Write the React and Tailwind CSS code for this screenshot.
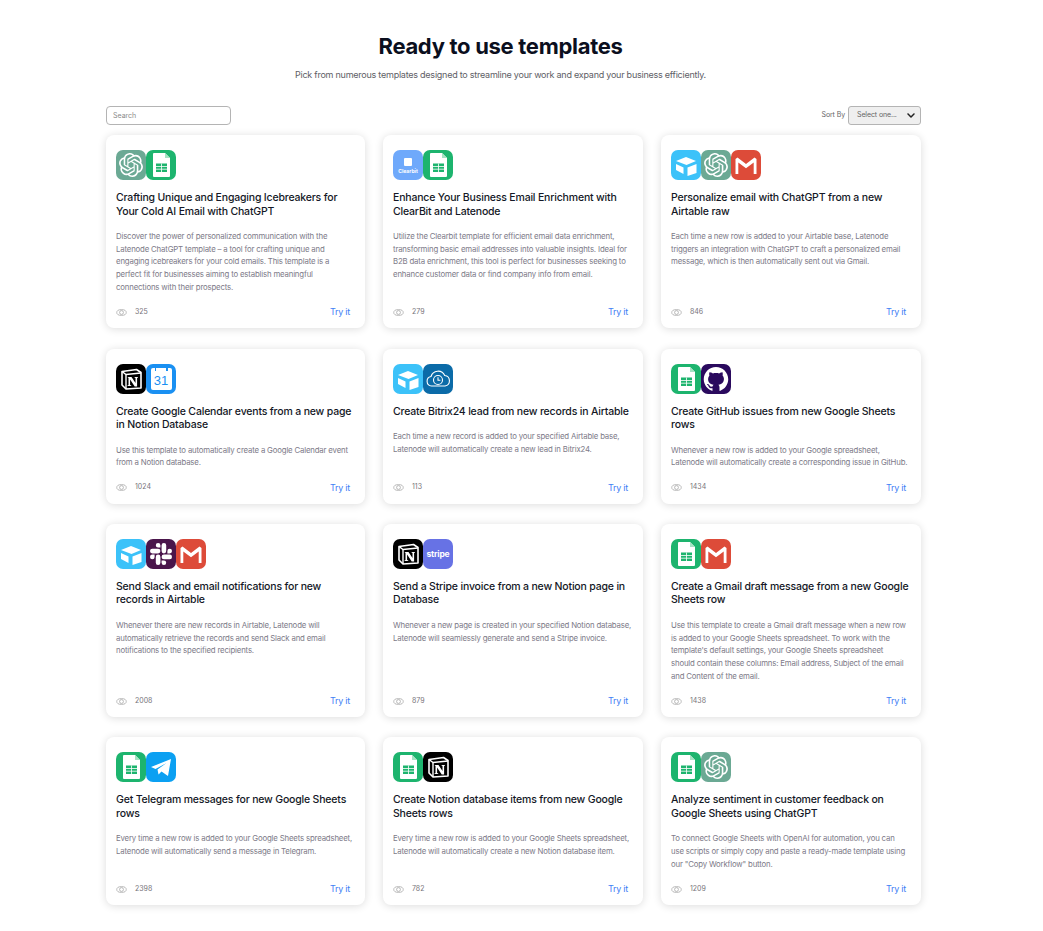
import { useState } from "react"
import { FaChevronDown } from "react-icons/fa"
import { AiOutlineGithub } from "react-icons/ai"
import { SiOpenai, SiSlack } from "react-icons/si"

function Tile({ color, children }) {
  return (
    <div className={`flex h-[30px] w-[30px] items-center justify-center overflow-hidden rounded-[7px] ${color}`}>
      {children}
    </div>
  )
}

const OpenAi = () => (
  <Tile color="bg-[#6ba994]">
    <SiOpenai className="h-[24px] w-[24px] text-white" />
  </Tile>
)

const Sheets = () => (
  <Tile color="bg-[#1db46e]">
    <svg viewBox="0 0 30 30" className="h-[30px] w-[30px]">
      <path d="M8 3h11l5 5v18a1 1 0 0 1-1 1H8a1 1 0 0 1-1-1V4a1 1 0 0 1 1-1z" fill="#fff" />
      <path d="M19 3l5 5h-5z" fill="#a5e3c4" />
      <path d="M10 13.500h11v8.500H10z" fill="#1db46e" />
      <path d="M10 16.500h11M10 19.200h11M15.500 13.500v8.500" stroke="#fff" strokeWidth="0.8" />
    </svg>
  </Tile>
)

const Gmail = () => (
  <Tile color="bg-[#dd4b39]">
    <svg viewBox="0 0 30 30" className="h-[30px] w-[30px]">
      <path d="M4.500 24V9l2-1.500L15 14l8.500-6.500 2 1.500v15h-2.800V12.500L15 18.300 7.300 12.500V24z" fill="#fff" />
    </svg>
  </Tile>
)

const Airtable = () => (
  <Tile color="bg-[#3cc2f9]">
    <svg viewBox="0 0 30 30" className="h-[30px] w-[30px]">
      <path d="M15 7L25 11 15.500 15 5 11z" fill="#fff" />
      <path d="M16.500 17.500L25.500 14V23L16.500 26z" fill="#fff" />
      <path d="M5 14L12.500 17.500V24L5 20z" fill="#fff" />
    </svg>
  </Tile>
)

const Notion = () => (
  <Tile color="bg-black">
    <svg viewBox="0 0 30 30" className="h-[30px] w-[30px]">
      <path d="M6 7.500L20.500 5.500 25 8.500V24L10 25 6 21z" fill="#000" stroke="#fff" strokeWidth="1.600" strokeLinejoin="round" />
      <path d="M6 7.500L10 10.500 25 9" fill="none" stroke="#fff" strokeWidth="1.400" />
      <path d="M10 10.500V25" stroke="#fff" strokeWidth="1.400" />
      <path d="M12.500 13h3l4 6v-5l-1-.6V13h3.500v.4l-.9.6v8.500h-2.400l-4.600-7v5.500l1.200.6v.5h-3.800v-.5l1-.6V14l-1-.5z" fill="#fff" />
    </svg>
  </Tile>
)

const Calendar = () => (
  <Tile color="bg-[#1a90f2]">
    <div className="relative flex h-[22px] w-[21px] items-center justify-center rounded-[2px] bg-white pt-[3px]">
      <span className="font-['Liberation_Sans',sans-serif] text-[13px] leading-none text-[#1a90f2]">31</span>
      <div className="absolute left-[4px] top-0 h-[3px] w-[1.500px] bg-[#1a90f2]" />
      <div className="absolute right-[4px] top-0 h-[3px] w-[1.500px] bg-[#1a90f2]" />
    </div>
  </Tile>
)

const Bitrix = () => (
  <Tile color="bg-[#0b6ba8]">
    <svg viewBox="0 0 30 30" className="h-[30px] w-[30px]" fill="none" stroke="#fff" strokeWidth="1.100">
      <path d="M8.500 22a4.800 4.800 0 0 1-.5-9.500 7.300 7.300 0 0 1 13.700-1 5.300 5.300 0 0 1 .3 10.500z" />
      <circle cx="15" cy="16" r="4.500" />
      <path d="M15 13.300v3h2.400" />
    </svg>
  </Tile>
)

const Github = () => (
  <Tile color="bg-[#2a0a5e]">
    <AiOutlineGithub className="h-[28px] w-[28px] text-white" />
  </Tile>
)

const Slack = () => (
  <Tile color="bg-[#4a154b]">
    <SiSlack className="h-[22px] w-[22px] text-white" />
  </Tile>
)

const Stripe = () => (
  <Tile color="bg-[#6772e5]">
    <span className="text-[8.500px] font-bold tracking-[-0.2px] text-white">stripe</span>
  </Tile>
)

const Clearbit = () => (
  <Tile color="bg-[#6fa9fb]">
    <div className="flex flex-col items-center gap-[3px] pt-[1px]">
      <div className="h-[8px] w-[8px] rounded-[1px] bg-white" />
      <span className="text-[5px] font-bold leading-none text-white">Clearbit</span>
    </div>
  </Tile>
)

const Telegram = () => (
  <Tile color="bg-[#0ba0f2]">
    <svg viewBox="0 0 30 30" className="h-[30px] w-[30px]">
      <path d="M5 15L25 7 22 24 15.500 19.500 12.500 22.500 11.500 17.500 20.500 11 9.500 17z" fill="#fff" />
    </svg>
  </Tile>
)

const templates = [
  {
    icons: [OpenAi, Sheets],
    title: "Crafting Unique and Engaging Icebreakers for\nYour Cold AI Email with ChatGPT",
    text: "Discover the power of personalized communication with the\nLatenode ChatGPT template – a tool for crafting unique and\nengaging icebreakers for your cold emails. This template is a\nperfect fit for businesses aiming to establish meaningful\nconnections with their prospects.",
    views: 325,
  },
  {
    icons: [Clearbit, Sheets],
    title: "Enhance Your Business Email Enrichment with\nClearBit and Latenode",
    text: "Utilize the Clearbit template for efficient email data enrichment,\ntransforming basic email addresses into valuable insights. Ideal for\nB2B data enrichment, this tool is perfect for businesses seeking to\nenhance customer data or find company info from email.",
    views: 279,
  },
  {
    icons: [Airtable, OpenAi, Gmail],
    title: "Personalize email with ChatGPT from a new\nAirtable raw",
    text: "Each time a new row is added to your Airtable base, Latenode\ntriggers an integration with ChatGPT to craft a personalized email\nmessage, which is then automatically sent out via Gmail.",
    views: 846,
  },
  {
    icons: [Notion, Calendar],
    title: "Create Google Calendar events from a new page\nin Notion Database",
    text: "Use this template to automatically create a Google Calendar event\nfrom a Notion database.",
    views: 1024,
  },
  {
    icons: [Airtable, Bitrix],
    title: "Create Bitrix24 lead from new records in Airtable",
    text: "Each time a new record is added to your specified Airtable base,\nLatenode will automatically create a new lead in Bitrix24.",
    views: 113,
  },
  {
    icons: [Sheets, Github],
    title: "Create GitHub issues from new Google Sheets\nrows",
    text: "Whenever a new row is added to your Google spreadsheet,\nLatenode will automatically create a corresponding issue in GitHub.",
    views: 1434,
  },
  {
    icons: [Airtable, Slack, Gmail],
    title: "Send Slack and email notifications for new\nrecords in Airtable",
    text: "Whenever there are new records in Airtable, Latenode will\nautomatically retrieve the records and send Slack and email\nnotifications to the specified recipients.",
    views: 2008,
  },
  {
    icons: [Notion, Stripe],
    title: "Send a Stripe invoice from a new Notion page in\nDatabase",
    text: "Whenever a new page is created in your specified Notion database,\nLatenode will seamlessly generate and send a Stripe invoice.",
    views: 879,
  },
  {
    icons: [Sheets, Gmail],
    title: "Create a Gmail draft message from a new Google\nSheets row",
    text: "Use this template to create a Gmail draft message when a new row\nis added to your Google Sheets spreadsheet. To work with the\ntemplate's default settings, your Google Sheets spreadsheet\nshould contain these columns: Email address, Subject of the email\nand Content of the email.",
    views: 1438,
  },
  {
    icons: [Sheets, Telegram],
    title: "Get Telegram messages for new Google Sheets\nrows",
    text: "Every time a new row is added to your Google Sheets spreadsheet,\nLatenode will automatically send a message in Telegram.",
    views: 2398,
  },
  {
    icons: [Sheets, Notion],
    title: "Create Notion database items from new Google\nSheets rows",
    text: "Every time a new row is added to your Google Sheets spreadsheet,\nLatenode will automatically create a new Notion database item.",
    views: 782,
  },
  {
    icons: [Sheets, OpenAi],
    title: "Analyze sentiment in customer feedback on\nGoogle Sheets using ChatGPT",
    text: "To connect Google Sheets with OpenAI for automation, you can\nuse scripts or simply copy and paste a ready-made template using\nour \"Copy Workflow\" button.",
    views: 1209,
  },
]

function TemplateCard({ item }) {
  return (
    <div className="flex flex-col rounded-lg bg-white pb-[10px] pl-[10px] pr-[15px] pt-[15px] shadow-[0_1px_8px_rgba(0,0,0,0.14)]">
      <div className="flex">
        {item.icons.map((Icon, idx) => (
          <Icon key={idx} />
        ))}
      </div>
      <h3 className="mt-[11px] whitespace-pre text-[10.500px] font-medium leading-[13.500px] tracking-[-0.18px] text-[#141826]">
        {item.title}
      </h3>
      <p className="mb-[12.600px] mt-[12px] whitespace-pre text-[7.800px] leading-[12.700px] tracking-[-0.17px] text-[#7d7a88]">
        {item.text}
      </p>
      <div className="mt-auto flex h-[12px] items-center justify-between">
        <div className="flex items-center">
          <svg viewBox="0 0 12 8" className="h-[7px] w-[11px]" fill="none" stroke="#a8a8a8" strokeWidth="0.9">
            <ellipse cx="6" cy="4" rx="5.400" ry="3.300" />
            <circle cx="6" cy="4" r="2.200" />
          </svg>
          <span className="ml-[8px] text-[7px] text-[#77737a]">{item.views}</span>
        </div>
        <a href="#" className="text-[9px] tracking-[-0.25px] text-[#3f80f5]">Try it</a>
      </div>
    </div>
  )
}

export default function App() {
  const [search, setSearch] = useState("")

  return (
    <div className="min-h-[931px] bg-white pb-[25px] pt-[33px] font-['Inter','Liberation_Sans',sans-serif]">
      <div className="w-[1001px] text-center">
        <h1 className="text-[22px] font-bold leading-[27px] tracking-[-0.3px] text-[#0b0f1e]">Ready to use templates</h1>
        <p className="mt-[8px] text-[9px] leading-[13px] tracking-[-0.24px] text-[#5e5e66]">
          Pick from numerous templates designed to streamline your work and expand your business efficiently.
        </p>
      </div>

      <div className="ml-[106px] mt-[25px] w-[815px]">
        <div className="flex items-center justify-between">
          <input
            value={search}
            onChange={(e) => setSearch(e.target.value)}
            placeholder="Search"
            className="h-[19px] w-[125px] rounded-[4px] border border-[#b4b4b4] bg-white px-[6px] text-[7px] outline-none placeholder:text-[#8a8a8a]"
          />
          <div className="flex items-center">
            <span className="mr-[3px] text-[7px] tracking-[-0.1px] text-[#666]">Sort By</span>
            <button className="flex h-[19px] w-[73px] items-center justify-between rounded-[3px] border border-[#b4b4b4] bg-[#efefef] pl-[8px] pr-[3px] text-[7px] tracking-[-0.1px] text-[#666]">
              Select one...
              <FaChevronDown className="h-[9px] w-[12px] text-[#222]" />
            </button>
          </div>
        </div>

        <div className="mt-[10px] grid grid-cols-[259px_260px_260px] gap-x-[18px] gap-y-[20.400px]">
          {templates.map((item, idx) => (
            <TemplateCard key={idx} item={item} />
          ))}
        </div>
      </div>
    </div>
  )
}
